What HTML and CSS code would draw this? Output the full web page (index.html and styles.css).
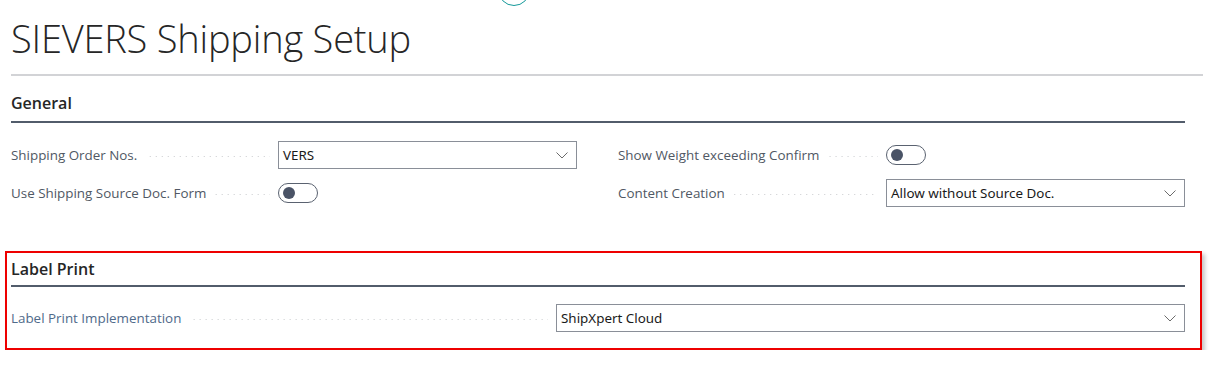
FILE: index.html
```html
<!DOCTYPE html>
<html lang="en">
<head>
<meta charset="utf-8">
<title>SIEVERS Shipping Setup</title>
<link rel="stylesheet" href="styles.css">
</head>
<body>
<div class="topbadge"></div>
<div class="page">
  <h1 class="title">SIEVERS Shipping Setup</h1>
  <div class="title-rule"></div>

  <section class="group">
    <h2 class="group-head">General</h2>
    <div class="grid">
      <div class="col">
        <div class="field">
          <span class="label">Shipping Order Nos.</span><span class="leader"></span>
          <div class="select"><span class="val">VERS</span><svg class="chev" viewBox="0 0 12 7" width="12" height="7"><path d="M0.5 0.5 L6 6 L11.5 0.5" fill="none" stroke="#6b6b6b" stroke-width="1"/></svg></div>
        </div>
        <div class="field">
          <span class="label">Use Shipping Source Doc. Form</span><span class="leader"></span>
          <div class="ctrl"><span class="toggle"><span class="knob"></span></span></div>
        </div>
      </div>
      <div class="col">
        <div class="field">
          <span class="label">Show Weight exceeding Confirm</span><span class="leader"></span>
          <div class="ctrl"><span class="toggle"><span class="knob"></span></span></div>
        </div>
        <div class="field">
          <span class="label">Content Creation</span><span class="leader"></span>
          <div class="select"><span class="val">Allow without Source Doc.</span><svg class="chev" viewBox="0 0 12 7" width="12" height="7"><path d="M0.5 0.5 L6 6 L11.5 0.5" fill="none" stroke="#6b6b6b" stroke-width="1"/></svg></div>
        </div>
      </div>
    </div>
  </section>

  <section class="group highlight">
    <h2 class="group-head">Label Print</h2>
    <div class="field wide">
      <span class="label blue">Label Print Implementation</span><span class="leader"></span>
      <div class="select widesel"><span class="val">ShipXpert Cloud</span><svg class="chev" viewBox="0 0 12 7" width="12" height="7"><path d="M0.5 0.5 L6 6 L11.5 0.5" fill="none" stroke="#6b6b6b" stroke-width="1"/></svg></div>
    </div>
  </section>
</div>
</body>
</html>
```

FILE: styles.css
```css
html, body {
  margin: 0;
  padding: 0;
  background: #ffffff;
}
body {
  font-family: "Segoe UI", "Open Sans", "Noto Sans", sans-serif;
  color: #212121;
  position: relative;
  overflow: hidden;
}
.topbadge {
  position: absolute;
  left: 498px;
  top: -26px;
  width: 30px;
  height: 30px;
  border: 1.5px solid #15999a;
  border-radius: 50%;
}
.page {
  padding: 0 22px 0 11px;
}
.title {
  margin: 0;
  padding-top: 12px;
  height: 52px;
  font-size: 38px;
  font-weight: 300;
  line-height: 52px;
  color: #262626;
  letter-spacing: -0.2px;
}
.title-rule {
  height: 2px;
  background: #d2d3d6;
  margin-top: 10px;
  width: 1192px;
}
.group {
  width: 1174px;
}
.group-head {
  margin: 0;
  font-size: 16px;
  font-weight: 600;
  line-height: 22px;
  color: #262626;
  padding: 16px 0 7px;
  border-bottom: 2px solid #525c6b;
}
.grid {
  display: grid;
  grid-template-columns: 566px 567px;
  column-gap: 41px;
  padding-top: 18px;
}
.col {
  display: flex;
  flex-direction: column;
  gap: 10px;
}
.field {
  display: flex;
  align-items: center;
  height: 28px;
}
.label {
  font-size: 13.4px;
  color: #505864;
  white-space: nowrap;
  padding-right: 8px;
}
.label.blue {
  color: #4f6a8a;
}
.leader {
  flex: 1;
  height: 1px;
  margin-top: 3px;
  margin-right: 8px;
  background-image: linear-gradient(to right, #c9cbce 1px, transparent 1px);
  background-size: 6px 1px;
  background-repeat: repeat-x;
  background-position: right center;
}
.select, .ctrl {
  width: 299px;
  flex: none;
  height: 28px;
  box-sizing: border-box;
  display: flex;
  align-items: center;
}
.select {
  border: 1px solid #8a8f98;
  padding: 0 8px 0 4px;
  justify-content: space-between;
}
.val {
  font-size: 13.4px;
  color: #1a1a1a;
  font-family: "Segoe UI", "Noto Sans", sans-serif;
}
.chev {
  display: block;
}
.toggle {
  width: 40px;
  height: 20px;
  box-sizing: border-box;
  border: 1px solid #5a6270;
  border-radius: 10px;
  display: flex;
  align-items: center;
  padding-left: 4px;
}
.knob {
  width: 12px;
  height: 12px;
  border-radius: 50%;
  background: #4a5366;
}
.highlight {
  margin-top: 44px;
  margin-left: -6px;
  width: 1197px;
  box-sizing: border-box;
  border: 2px solid #ee0000;
  padding: 0 15px 16px 4px;
  box-shadow: 3px 3px 4px rgba(0, 0, 0, 0.22);
}
.highlight .group-head {
  padding-top: 5px;
  padding-bottom: 5px;
}
.wide {
  margin-top: 17px;
}
.widesel {
  width: 629px;
}
```
